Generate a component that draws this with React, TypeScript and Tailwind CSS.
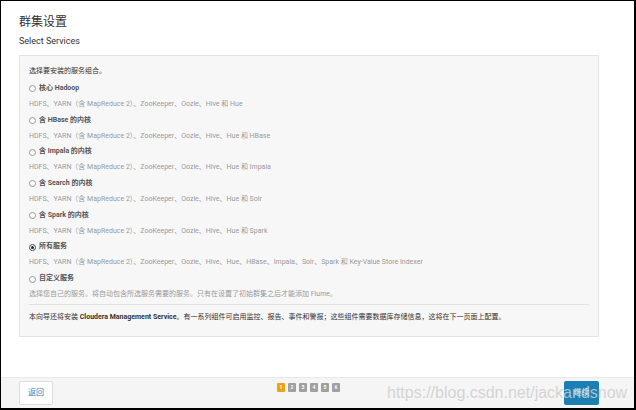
import React from "react";

const base = "HDFS、YARN（含 MapReduce 2）、ZooKeeper、Oozie、Hive";

const options = [
  { label: <>核心 Hadoop</>, desc: `${base} 和 Hue` },
  { label: <>含 HBase 的内核</>, desc: `${base}、Hue 和 HBase` },
  { label: <>含 Impala 的内核</>, desc: `${base}、Hue 和 Impala` },
  { label: <>含 Search 的内核</>, desc: `${base}、Hue 和 Solr` },
  { label: <>含 Spark 的内核</>, desc: `${base}、Hue 和 Spark` },
  {
    label: <>所有服务</>,
    desc: `${base}、Hue、HBase、Impala、Solr、Spark 和 Key-Value Store Indexer`,
    checked: true,
  },
  {
    label: <>自定义服务</>,
    desc: "选择您自己的服务。将自动包含所选服务需要的服务。只有在设置了初始群集之后才能添加 Flume。",
  },
];

function Radio({ checked }: { checked?: boolean }) {
  return (
    <span
      className={
        "mr-[3px] flex h-[7px] w-[7px] flex-none items-center justify-center rounded-full border bg-white " +
        (checked ? "border-[#444]" : "border-[#999]")
      }
    >
      {checked && <span className="h-[3px] w-[3px] rounded-full bg-[#222]" />}
    </span>
  );
}

export default function App() {
  return (
    <div className="relative flex h-[410px] w-[636px] flex-col border-b-2 border-l border-r-2 border-t border-black bg-white font-['Roboto','Noto_Sans_CJK_SC',sans-serif] text-[#333]">
      <div className="flex-1 pl-[18px] pr-[35px] pt-[13px]">
        <div className="text-[12px] leading-[16px] text-[#333]">群集设置</div>
        <div className="mt-[4px] text-[9px] leading-[14px] text-[#333]">Select Services</div>

        <div className="mt-[7px] border border-[#e3e3e3] bg-[#f7f7f7] px-[9px] pb-[11px] pt-[7px] text-[7px] leading-[16px]">
          <div className="text-[#333]">选择要安装的服务组合。</div>
          <div className="mt-[2px] leading-[15.85px]">
            {options.map((o, i) => (
              <div key={i}>
                <div className="flex items-center font-bold text-[#555]">
                  <Radio checked={o.checked} />
                  <span>{o.label}</span>
                </div>
                <div className="text-[#9a9a9a]">{o.desc}</div>
              </div>
            ))}
          </div>
          <div className="mt-[1px] border-t border-[#e3e3e3] pt-[4px] text-[#333]">
            本向导还将安装 <b>Cloudera Management Service</b>
            。有一系列组件可启用监控、报告、事件和警报；这些组件需要数据库存储信息，这将在下一页面上配置。
          </div>
        </div>
      </div>

      <div className="flex h-[31px] flex-none items-center justify-between border-t border-[#e8e8e8] bg-[#f5f5f5] pl-[18px] pr-[35px]">
        <button className="flex h-[24px] w-[34px] items-center justify-center rounded-[2px] border border-[#dcdcdc] bg-white text-[8px] text-[#2b86bd]">
          返回
        </button>
        <div className="flex gap-[3px] self-start pt-[5px]">
          {[1, 2, 3, 4, 5, 6].map((n) => (
            <span
              key={n}
              className={
                "flex h-[9px] w-[8px] items-center justify-center rounded-[1px] text-[5px] font-bold leading-none text-white " +
                (n === 1 ? "bg-[#f0a30a]" : "bg-[#a0a0a0]")
              }
            >
              {n}
            </span>
          ))}
        </div>
        <button className="flex h-[24px] w-[35px] items-center justify-center rounded-[2px] bg-[#1a80b4] text-[8px] text-white">
          继续
        </button>
      </div>

      <div className="pointer-events-none absolute left-[386px] top-[382px] font-['Liberation_Sans',sans-serif] text-[16px] leading-[20px] text-[rgba(205,205,205,0.85)]">
        https://blog.csdn.net/jackandsnow
      </div>
    </div>
  );
}
